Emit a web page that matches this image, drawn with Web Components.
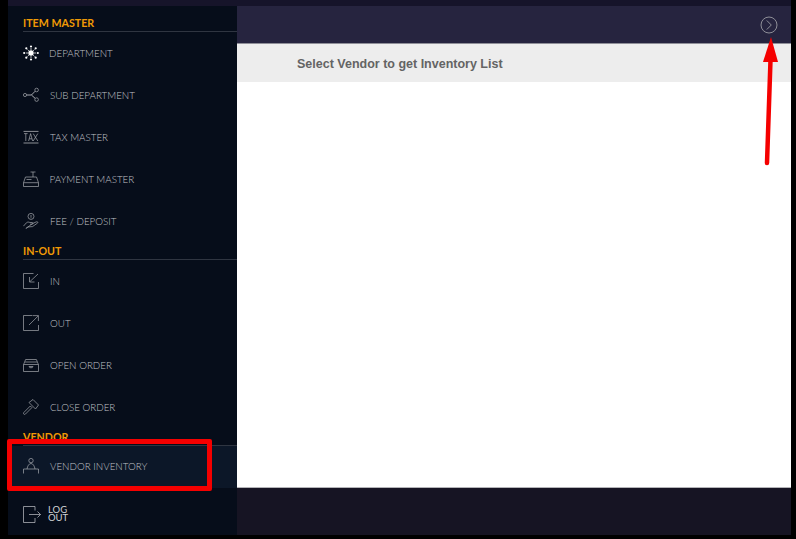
<!DOCTYPE html>
<html>
<head>
<meta charset="utf-8">
<style>
  html, body { margin: 0; padding: 0; background: #000; }
  body { width: 796px; height: 539px; overflow: hidden; font-family: "Lato", sans-serif; }
</style>
</head>
<body>
<app-shell>
  <side-bar slot="side">
    <nav-group label="ITEM MASTER" style="--first:8px">
      <nav-item label="DEPARTMENT" gap="10"><svg viewBox="0 0 16 16" fill="#fff"><circle cx="8" cy="8" r="2.7"/><circle cx="8" cy="1.5" r="1.1"/><circle cx="8" cy="14.5" r="1.1"/><circle cx="1.2" cy="8" r="1.1"/><circle cx="14.8" cy="8" r="1.1"/><circle cx="3.3" cy="3.3" r="1.1"/><circle cx="12.7" cy="3.3" r="1.1"/><circle cx="3.3" cy="12.7" r="1.1"/><circle cx="12.7" cy="12.7" r="1.1"/><path d="M8 3v2M8 11v2M3 8h2M11 8h2M4.5 4.5l1.4 1.4M11.5 4.5l-1.4 1.4M4.5 11.5l1.4-1.4M11.5 11.5l-1.4-1.4" stroke="#fff" stroke-width=".7"/></svg></nav-item>
      <nav-item label="SUB DEPARTMENT"><svg viewBox="0 0 16 16" fill="none" stroke="#a6a9af" stroke-width=".7"><circle cx="2" cy="8" r="1.6"/><circle cx="13.6" cy="3" r="1.8"/><circle cx="13.6" cy="12.6" r="1.8"/><path d="M3.6 8h4.8M8.4 8l3.8-3.800M8.4 8l3.800 3.400" stroke-width="1"/></svg></nav-item>
      <nav-item label="TAX MASTER"><svg viewBox="0 0 16 16"><path d="M.5 2.4h15M.5 14h15" stroke="#c8cace" stroke-width=".7" fill="none"/><path d="M1 4.6h3.6M2.8 4.6v7.4M5.6 12l2-7.4 2 7.4M6.2 9.8h2.8M10.2 4.6l4.6 7.4M14.8 4.6l-4.6 7.4" stroke="#a6a9af" stroke-width=".7" fill="none"/></svg></nav-item>
      <nav-item label="PAYMENT MASTER" gap="10.5"><svg viewBox="0 0 16 16" fill="none" stroke="#a6a9af" stroke-width=".7"><path d="M.5 15.5v-3.800h15v3.800zM.5 11.700L2.500 6h11l2 5.700M10 6V1M7.500 1h5M3.500 8.500h5"/></svg></nav-item>
      <nav-item label="FEE / DEPOSIT"><svg viewBox="0 0 16 16" fill="none" stroke="#a6a9af" stroke-width=".7"><circle cx="8" cy="3.400" r="3"/><path d="M8 2v2.800M.4 13.200l3-3.400c1.200-1 2.400-.8 3.500-.3h2.400c1 .2 1 1.500 0 1.700H7M9.500 10.500l4-1.700c1.200-.3 1.700.6 1 1.300l-5 3.500-5 .4-1.500 1.500z"/></svg></nav-item>
    </nav-group>
    <nav-group label="IN-OUT">
      <nav-item label="IN"><svg viewBox="0 0 16 16" fill="none" stroke="#a6a9af" stroke-width=".7"><path d="M15.500 9v6.500H.5V.5h10M15 1L7 8.500M6.500 4v5h5"/></svg></nav-item>
      <nav-item label="OUT"><svg viewBox="0 0 16 16" fill="none" stroke="#a6a9af" stroke-width=".7"><path d="M15.500 10v5.500H.5V.5h9M6 10L15.300 .8M10 .6h5.400V6"/></svg></nav-item>
      <nav-item label="OPEN ORDER"><svg viewBox="0 0 16 16" fill="none" stroke="#a6a9af" stroke-width=".7"><path d="M.5 14.500V7.500h15v7zM.6 7.500l2-5h10.800l2 5M2 5h12M6 9.500h4l-.8 1.200H6.800z"/></svg></nav-item>
      <nav-item label="CLOSE ORDER"><svg viewBox="0 0 16 16" fill="none" stroke="#a6a9af" stroke-width=".7"><path d="M.8 13.500l6.500-6.500 1.600 1.600-6.500 6.500q-1 .6-1.600 0t0-1.600zM6 3.500l4-3 5.500 5.500-3 4z"/></svg></nav-item>
    </nav-group>
    <nav-group label="VENDOR">
      <nav-item label="VENDOR INVENTORY" active style="padding-bottom:2px;box-sizing:border-box"><svg viewBox="0 0 16 16" fill="none" stroke="#a6a9af" stroke-width=".7"><circle cx="8" cy="2.600" r="2.200"/><path d="M.5 15.500V11h15v4.500M4 11c.5-3 2-5.500 4-5.500s3.500 2.500 4 5.500"/></svg></nav-item>
    </nav-group>
    <log-out></log-out>
  </side-bar>
  <top-bar slot="top"></top-bar>
  <list-heading slot="heading">Select Vendor to get Inventory List</list-heading>
</app-shell>
<mark-up></mark-up>

<script>
class AppShell extends HTMLElement {
  constructor() {
    super()
    this.attachShadow({ mode: 'open' })
    this.shadowRoot.innerHTML = `
    <style>
      :host { display: block; width: 796px; height: 539px; box-sizing: border-box; padding: 0 5px 4px 8px; }
      .frame { display: grid; grid-template-columns: 229px 1fr; grid-template-rows: 6px 1fr; height: 100%; background: #16142a; }
      .strip { grid-column: 1 / 3; background: #16142a; }
      .main { display: flex; flex-direction: column; }
      .white { flex: 1; background: #fff; }
      .foot { height: 48px; background: #161423; border-top: 1px solid #b4b4b8; box-sizing: border-box; }
    </style>
    <div class="frame">
      <div class="strip"></div>
      <slot name="side"></slot>
      <div class="main">
        <slot name="top"></slot>
        <slot name="heading"></slot>
        <div class="white"></div>
        <div class="foot"></div>
      </div>
    </div>`
  }
}

class SideBar extends HTMLElement {
  constructor() {
    super()
    this.attachShadow({ mode: 'open' })
    this.shadowRoot.innerHTML = `
    <style>
      :host { display: flex; flex-direction: column; background: #060d1a; }
    </style>
    <slot></slot>`
  }
}

class NavGroup extends HTMLElement {
  constructor() {
    super()
    this.attachShadow({ mode: 'open' })
    this.shadowRoot.innerHTML = `
    <style>
      :host { display: block; }
      .title { margin: var(--first, 0) 0 0 15px; height: 17px; border-bottom: 1px solid #2f3541; color: #f09a05; font: 700 10.7px/18px "Lato", sans-serif; }
    </style>
    <div class="title"></div>
    <slot></slot>`
    this.shadowRoot.querySelector('.title').textContent = this.getAttribute('label')
  }
}

class NavItem extends HTMLElement {
  constructor() {
    super()
    this.attachShadow({ mode: 'open' })
    this.shadowRoot.innerHTML = `
    <style>
      :host { display: flex; align-items: center; height: 42px; padding-left: 15px; color: #c0c2c7; font: 300 9.8px "Lato", sans-serif; }
      :host([active]) { background: #0c1728; }
      .icon { display: flex; width: 16px; height: 16px; flex: none; }
      .label { position: relative; top: -.5px; }
      ::slotted(svg) { width: 16px; height: 16px; display: block; }
    </style>
    <span class="icon"><slot></slot></span>
    <span class="label"></span>`
    const label = this.shadowRoot.querySelector('.label')
    label.textContent = this.getAttribute('label')
    label.style.marginLeft = (this.getAttribute('gap') || 11) + 'px'
  }
}

class LogOut extends HTMLElement {
  constructor() {
    super()
    this.attachShadow({ mode: 'open' })
    this.shadowRoot.innerHTML = `
    <style>
      :host { display: flex; align-items: center; height: 47px; box-sizing: border-box; padding: 5px 0 0 15px; color: #d0d2d6; font: 400 9.5px/8.5px "Lato", sans-serif; }
      svg { width: 18px; height: 17px; flex: none; }
      span { margin-left: 7px; }
    </style>
    <svg viewBox="0 0 18 17" fill="none" stroke="#c4c6cb" stroke-width=".7"><path d="M12 4.500V.5H.5v16H12v-4.500M6 8.500h11.500M14.500 5.500l3 3-3 3"/></svg>
    <span>LOG<br>OUT</span>`
  }
}

class TopBar extends HTMLElement {
  constructor() {
    super()
    this.attachShadow({ mode: 'open' })
    this.shadowRoot.innerHTML = `
    <style>
      :host { display: flex; justify-content: flex-end; align-items: center; height: 38px; box-sizing: border-box; padding: 1px 13px 0 0; background: #26243f; border-bottom: 1px solid #8f8f98; }
      svg { width: 18px; height: 18px; display: block; }
    </style>
    <svg viewBox="0 0 18 18" fill="none" stroke="#8f8f98" stroke-width="1"><circle cx="9" cy="9" r="8"/><path d="M6.800 4.500l4.500 4.500-4.500 4.500"/></svg>`
  }
}

class ListHeading extends HTMLElement {
  constructor() {
    super()
    this.attachShadow({ mode: 'open' })
    this.shadowRoot.innerHTML = `
    <style>
      :host { display: flex; align-items: center; height: 38px; box-sizing: border-box; padding: 1px 0 0 60px; background: #ededed; color: #646464; font: 700 12.5px "Liberation Sans", sans-serif; }
    </style>
    <slot></slot>`
  }
}

// annotations painted over the screenshot
class MarkUp extends HTMLElement {
  constructor() {
    super()
    this.attachShadow({ mode: 'open' })
    this.shadowRoot.innerHTML = `
    <style>
      :host { position: absolute; left: 0; top: 0; width: 796px; height: 539px; pointer-events: none; }
      .box { position: absolute; left: 7px; top: 439px; width: 205px; height: 52px; box-sizing: border-box; border: 5px solid #f50000; border-radius: 2px; }
      svg { position: absolute; left: 0; top: 0; }
    </style>
    <div class="box"></div>
    <svg width="796" height="539"><path d="M767 163L770.500 60" stroke="#f50000" stroke-width="4.500" stroke-linecap="round"/><path d="M771 37l-8 25h15z" fill="#f50000"/></svg>`
  }
}

customElements.define('app-shell', AppShell)
customElements.define('side-bar', SideBar)
customElements.define('nav-group', NavGroup)
customElements.define('nav-item', NavItem)
customElements.define('log-out', LogOut)
customElements.define('top-bar', TopBar)
customElements.define('list-heading', ListHeading)
customElements.define('mark-up', MarkUp)
</script>
</body>
</html>
